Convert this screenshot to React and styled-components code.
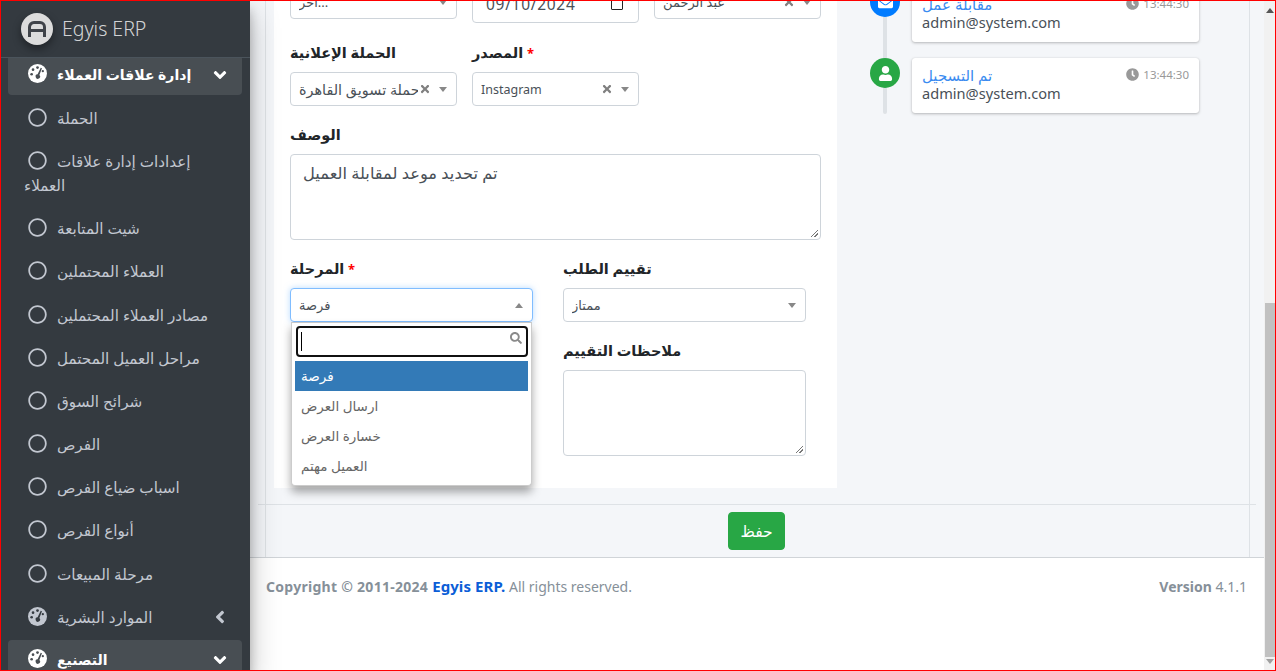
import React from "react";
import styled, { createGlobalStyle } from "styled-components";
import { FaRegCircle, FaAngleDown, FaAngleLeft, FaClock, FaUser, FaEnvelope, FaTimes, FaSearch } from "react-icons/fa";

const Global = createGlobalStyle`
  html, body { margin: 0; padding: 0; height: 671px; overflow: hidden; background: #fff; }
  body, button, input, textarea { font-family: "Noto Sans", "DejaVu Sans", sans-serif; }
  * { box-sizing: border-box; }
`;
const Page = styled.div`position: relative; display: flex; width: 1276px; height: 671px; overflow: hidden;`;
const Frame = styled.div`position: absolute; inset: 0; border: 1px solid #f00; pointer-events: none; z-index: 20;`;
const Sidebar = styled.aside`
  width: 250px; flex: none; height: 671px; overflow: hidden; background: #343a40; position: relative; z-index: 5;
  box-shadow: 0 14px 28px rgba(0,0,0,.25), 0 10px 10px rgba(0,0,0,.22);
`;
const Brand = styled.div`
  height: 58px; flex: none; display: flex; align-items: center; gap: 9px; padding: 0 0 0 21px; border-bottom: 1px solid #4b545c;
  color: rgba(255,255,255,.8); font-size: 19.5px; font-weight: 300; position: relative; z-index: 1; background: #343a40;
`;
const LogoCircle = styled.div`
  width: 32px; height: 32px; border-radius: 50%; background: #dcdcdc; display: flex; align-items: center; justify-content: center;
  box-shadow: 0 4px 8px rgba(0,0,0,.4);
`;
const Nav = styled.nav`display: flex; flex-direction: column; padding: 0 8px; margin-top: -3px;`;
const Item = styled.div`
  position: relative; flex: none; height: ${p => (p.$tall ? 63.6 : 40)}px; margin-bottom: 3.2px; padding: 8px 16px; border-radius: 4px; line-height: 24px;
  font-size: ${p => (p.$active ? 14 : 15.2)}px; color: ${p => (p.$active ? "#fff" : "#c2c7d0")}; background: ${p => (p.$active ? "rgba(255,255,255,.1)" : "transparent")};
  font-weight: ${p => (p.$active ? 600 : 400)};
`;
const IconSlot = styled.span`
  display: inline-flex; width: 25px; margin: 0 7px 0 1px; justify-content: center; vertical-align: -3px; font-size: 19px;
`;
const Caret = styled.span`position: absolute; right: 12px; top: 10px; font-size: 20px; display: flex; color: ${p => (p.$active ? "#fff" : "#c2c7d0")};`;
const Main = styled.main`flex: 1; min-width: 0; display: flex; flex-direction: column; height: 671px;`;
const Content = styled.section`height: 558px; flex: none; background: #f4f6f9; border-bottom: 1px solid #d0d4d8; padding: 0 14px 0 15px; overflow: hidden;`;
const Card = styled.div`height: 557px; border-left: 1px solid #dee2e6; border-right: 1px solid #dee2e6; display: flex; flex-direction: column;`;
const CardBody = styled.div`height: 505px; flex: none; display: flex; align-items: flex-start; overflow: hidden; margin: 0 -7px 0 -8px; padding-left: 16px; border-bottom: 1px solid #dee2e6;`;
const CardFoot = styled.div`flex: 1; display: flex; align-items: center; justify-content: center;`;
const Save = styled.button`
  width: 57px; height: 38px; border: 1px solid #28a745; border-radius: 4px; background: #28a745; color: #fff; font-size: 15.5px; margin-right: 2px; padding: 0;
`;
const Panel = styled.div`width: 563px; height: 503px; margin-top: -15px; background: #fff; padding: 0 16px 32px; flex: none;`;
const Row = styled.div`display: grid; grid-template-columns: ${p => p.$cols}; column-gap: ${p => p.$gap}px; margin-top: ${p => p.$mt || 0}px; margin-bottom: ${p => p.$mb || 0}px; align-items: start;`;
const Label = styled.label`display: block; height: 24px; line-height: 22px; margin-top: ${p => p.$mt || 0}px; margin-bottom: 7px; font-size: 14.5px; font-weight: 700; color: #212529;`;
const Req = styled.span`color: #f00; font-size: 13px;`;
const Box = styled.div`
  position: relative; height: ${p => p.$h || 34}px; border: 1px solid ${p => (p.$focus ? "#80bdff" : "#ced4da")}; border-radius: 4px; background: #fff;
  display: flex; align-items: center; padding: 0 8px; font-size: 13px; color: #495057;
  box-shadow: ${p => (p.$focus ? "0 0 6px rgba(128,189,255,.55)" : "none")};
`;
const BoxText = styled.span`flex: 1; min-width: 0; white-space: nowrap; overflow: hidden; font-size: ${p => p.$size || 13}px;`;
const Clear = styled.span`display: flex; font-size: 12px; color: #808080; margin: 0 8px 0 1px;`;
const Arrow = styled.span`
  width: 0; height: 0; border-left: 4px solid transparent; border-right: 4px solid transparent; margin-right: 1px;
  ${p => (p.$up ? "border-bottom: 5px solid #888;" : "border-top: 5px solid #888;")}
`;
const DateText = styled.span`flex: 1; font-size: 15.5px; letter-spacing: .7px; color: #495057; margin-left: 5px;`;
const CalBox = styled.span`width: 12px; height: 12px; border: 1.5px solid #222; margin-right: 7px; border-radius: 1px;`;
const Area = styled.div`
  height: ${p => p.$h}px; border: 1px solid #ced4da; border-radius: 4px; background: #fff; padding: 7px 12px; font-size: 16.3px; color: #495057; position: relative;
  &::after { content: ""; position: absolute; right: 2px; bottom: 2px; width: 7px; height: 7px;
    background: linear-gradient(135deg, transparent 0 45%, #777 45% 55%, transparent 55% 70%, #777 70% 80%, transparent 80%); }
`;
const Field = styled.div`position: relative;`;
const Drop = styled.div`
  position: absolute; left: 1px; top: 65px; width: 241px; height: 164px; background: #fff; border: 1px solid #ccc; border-top: 1px solid #c8c8c8;
  border-radius: 0 0 4px 4px; box-shadow: 0 6px 10px rgba(0,0,0,.35); padding: 3px 3px; z-index: 3;
`;
const SearchBox = styled.div`
  height: 31px; border: 2px solid #111; border-radius: 4px; background: #fff; margin: 0 0 4px 1px; position: relative; display: flex; align-items: center; justify-content: space-between; padding: 0 4px 0 3px;
`;
const Cursor = styled.span`width: 1px; height: 19px; background: #000;`;
const Mag = styled.span`display: flex; font-size: 12px; color: #8a8a8a; margin-bottom: 8px;`;
const Opt = styled.div`height: 30px; line-height: 30px; padding: 0 6px; font-size: 13.5px; color: ${p => (p.$on ? "#fff" : "#666")}; background: ${p => (p.$on ? "#337ab7" : "transparent")};`;
const Timeline = styled.div`flex: none; width: 362px; position: relative; padding: 0 0 0 33px; margin-top: -13px;
  &::before { content: ""; position: absolute; left: 46px; top: 0; width: 4px; height: 127px; background: #dee2e6; border-radius: 2px; }
`;
const TRow = styled.div`display: flex; gap: 12px; margin-bottom: 16px; position: relative;`;
const Dot = styled.div`width: 30px; height: 30px; border-radius: 50%; background: ${p => p.$c}; color: #fff; display: flex; align-items: center; justify-content: center; font-size: 15px; flex: none;`;
const TCard = styled.div`width: 287px; height: 55px; background: #fff; border-radius: 3px; box-shadow: 0 0 1px rgba(0,0,0,.13), 0 1px 3px rgba(0,0,0,.25); padding: 8px 10px 0; position: relative;`;
const TTitle = styled.div`color: #3b8bf0; font-size: 15px; line-height: 18px;`;
const TMail = styled.div`color: #495057; font-size: 14.6px; line-height: 18px;`;
const TTime = styled.span`position: absolute; right: 10px; top: 9px; display: flex; align-items: center; gap: 4px; color: #999; font-size: 11.5px; svg { font-size: 13px; }`;
const Foot = styled.footer`flex: 1; background: #fff; padding: 18px 17px 0 16px; display: flex; justify-content: space-between; align-items: baseline; font-size: 14px; color: #869099; line-height: 20px;`;
const B = styled.strong`font-weight: 700; letter-spacing: ${p => p.$ls || 0}px;`;
const FootLink = styled.strong`color: #0b5ed7; font-weight: 700; font-size: 15px; margin-left: 4px; letter-spacing: .1px;`;
const Scroll = styled.div`width: 12px; flex: none; height: 671px; background: #f1f1f1; position: relative;`;
const Thumb = styled.div`position: absolute; left: 1px; right: 0; top: 303px; height: 354px; background: #c1c1c1;`;
const SArrow = styled.span`position: absolute; left: 2px; ${p => (p.$up ? "top: 8px; border-bottom: 5px solid #555;" : "bottom: 7px; border-top: 5px solid #a0a0a0;")} width: 0; height: 0; border-left: 4px solid transparent; border-right: 4px solid transparent;`;

const items = [
  { t: "إدارة علاقات العملاء", a: 1, g: 1 },
  { t: "الحملة" },
  { t: "إعدادات إدارة علاقات", t2: "العملاء" },
  { t: "شيت المتابعة" }, { t: "العملاء المحتملين" }, { t: "مصادر العملاء المحتملين" }, { t: "مراحل العميل المحتمل" },
  { t: "شرائح السوق" }, { t: "الفرص" }, { t: "اسباب ضياع الفرص" }, { t: "أنواع الفرص" }, { t: "مرحلة المبيعات" },
  { t: "الموارد البشرية", g: 1 },
  { t: "التصنيع", a: 1, g: 1 },
];

const Logo = () => (
  <svg width="18" height="16" viewBox="0 0 18 16" fill="none">
    <path d="M1.5 16V6a4.5 4.5 0 0 1 4.5-4.5h6a4.5 4.5 0 0 1 4.5 4.5v10M1.5 9.5h15" stroke="#3f4349" strokeWidth="3" />
  </svg>
);

const Gauge = ({ dark }) => (
  <svg width="19" height="19" viewBox="0 0 20 20">
    <circle cx="10" cy="10" r="10" fill="currentColor" />
    <g fill={dark}>
      <circle cx="10" cy="3.8" r="1.4" />
      <circle cx="5.3" cy="6" r="1.4" />
      <circle cx="3.8" cy="10.8" r="1.4" />
      <circle cx="15.6" cy="7.6" r="1.2" />
      <path d="M13.4 3.9l1.3.5-2.7 7.2a2.3 2.3 0 1 1-1.9-.7z" />
    </g>
  </svg>
);

const SelectBox = ({ text, clear, up, focus, size }) => (
  <Box $focus={focus}>
    <BoxText $size={size}>{text}</BoxText>
    {clear && <Clear><FaTimes /></Clear>}
    <Arrow $up={up} />
  </Box>
);

export default function App() {
  return (
    <Page>
      <Global />
      <Sidebar>
        <Brand><LogoCircle><Logo /></LogoCircle>Egyis ERP</Brand>
        <Nav>
          {items.map(it => (
            <Item key={it.t} $active={it.a} $tall={it.t2}>
              <IconSlot>{it.g ? <Gauge dark={it.a ? "#494e53" : "#343a40"} /> : <FaRegCircle />}</IconSlot>
              {it.t}
              {it.t2 && <><br />{it.t2}</>}
              {it.g && <Caret $active={it.a}>{it.a ? <FaAngleDown /> : <FaAngleLeft />}</Caret>}
            </Item>
          ))}
        </Nav>
      </Sidebar>
      <Main>
        <Content>
          <Card>
            <CardBody>
              <Panel>
                <Row $cols="167px 167px 167px" $gap={15} $mb={18}>
                  <SelectBox text="أخر..." />
                  <Box $h={38}><DateText>09/10/2024</DateText><CalBox /></Box>
                  <SelectBox text="عبد الرحمن" clear />
                </Row>
                <Row $cols="167px 167px 167px" $gap={15} $mb={17}>
                  <Field><Label>الحملة الإعلانية</Label><SelectBox text="حملة تسويق القاهرة" clear size={14.4} /></Field>
                  <Field><Label>المصدر <Req>*</Req></Label><SelectBox text="Instagram" clear size={12.5} /></Field>
                </Row>
                <Field>
                  <Label>الوصف</Label>
                  <Area $h={86}>تم تحديد موعد لمقابلة العميل</Area>
                </Field>
                <Row $cols="243px 243px" $gap={30} $mt={17}>
                  <Field>
                    <Label>المرحلة <Req>*</Req></Label>
                    <SelectBox text="فرصة" up focus />
                    <Drop>
                      <SearchBox><Cursor /><Mag><FaSearch /></Mag></SearchBox>
                      <Opt $on>فرصة</Opt>
                      <Opt>ارسال العرض</Opt>
                      <Opt>خسارة العرض</Opt>
                      <Opt>العميل مهتم</Opt>
                    </Drop>
                  </Field>
                  <Field>
                    <Label>تقييم الطلب</Label>
                    <SelectBox text="ممتاز" />
                    <Label $mt={17}>ملاحظات التقييم</Label>
                    <Area $h={86} />
                  </Field>
                </Row>
              </Panel>
              <Timeline>
                <TRow>
                  <Dot $c="#007bff"><FaEnvelope /></Dot>
                  <TCard><TTitle>مقابلة عمل</TTitle><TMail>admin@system.com</TMail><TTime><FaClock />13:44:30</TTime></TCard>
                </TRow>
                <TRow>
                  <Dot $c="#28a745"><FaUser /></Dot>
                  <TCard><TTitle>تم التسجيل</TTitle><TMail>admin@system.com</TMail><TTime><FaClock />13:44:30</TTime></TCard>
                </TRow>
              </Timeline>
            </CardBody>
            <CardFoot><Save>حفظ</Save></CardFoot>
          </Card>
        </Content>
        <Foot>
          <span><B $ls={0.28}>Copyright © 2011-2024</B><FootLink>Egyis ERP.</FootLink> All rights reserved.</span>
          <span><B>Version</B> 4.1.1</span>
        </Foot>
      </Main>
      <Scroll><Thumb /><SArrow $up /><SArrow /></Scroll>
      <Frame />
    </Page>
  );
}
